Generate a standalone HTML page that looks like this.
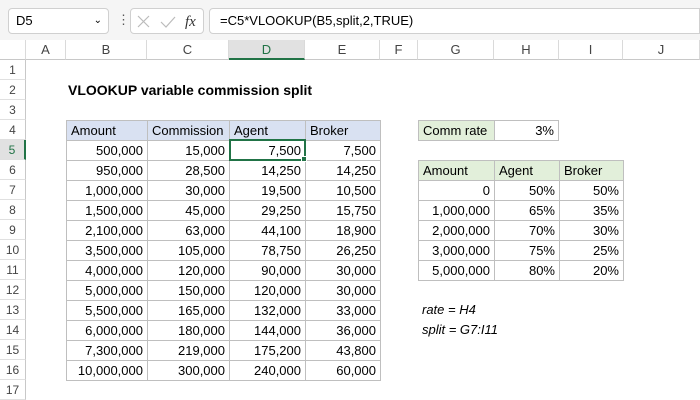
<!DOCTYPE html>
<html><head><meta charset="utf-8"><style>
*{box-sizing:border-box;margin:0;padding:0}
body{width:700px;height:400px;overflow:hidden;background:#fff;font-family:"Liberation Sans",sans-serif;position:relative;color:#000}
.a{position:absolute}
.c{position:absolute;font-size:13px;line-height:19px;height:21px;padding:0 4px;white-space:nowrap;overflow:hidden;border:1px solid #bfbfbf}
.r{text-align:right}
.hd{background:#d9e1f2}
.hg{background:#e2efda}
.ch{position:absolute;top:40px;height:20px;font-size:13px;line-height:20px;text-align:center;color:#444;border-right:1px solid #dadada;border-bottom:1px solid #c8c8c8;background:#fff}
.rh{position:absolute;left:0;width:26px;height:20px;font-size:12px;line-height:20px;text-align:center;color:#444;border-bottom:1px solid #e0e0e0;border-right:1px solid #c8c8c8;background:#fff}
</style></head><body>
<div class="a" style="left:0;top:0;width:700px;height:40px;background:#f5f5f5"></div>
<div class="a" style="left:8px;top:8px;width:101px;height:26px;background:#fff;border:1px solid #d0d0d0;border-radius:4px;font-size:13px;line-height:24px;padding-left:7px">D5<span style="position:absolute;right:6px;top:0;font-size:10px">&#8964;</span></div>
<div class="a" style="left:117px;top:13px;font-size:13px;color:#555;line-height:14px">&#8942;</div>
<div class="a" style="left:130px;top:8px;width:74px;height:26px;background:#fff;border:1px solid #d0d0d0;border-radius:4px"></div>
<svg class="a" style="left:135px;top:13px" width="70" height="18"><path d="M3 3l11 11M14 3L3 14" stroke="#bbb" stroke-width="1.2" fill="none"/><path d="M26 9l5 5 9-10" stroke="#bbb" stroke-width="1.2" fill="none"/><text x="50" y="13" font-family="Liberation Serif" font-style="italic" font-size="15" fill="#333">fx</text></svg>
<div class="a" style="left:209px;top:8px;width:491px;height:26px;background:#fff;border:1px solid #d0d0d0;border-radius:4px 0 0 4px;font-size:13px;line-height:24px;padding-left:10px">=C5*VLOOKUP(B5,split,2,TRUE)</div>

<div class="ch" style="left:0;width:26px;background:#fff"></div>
<div class="ch" style="left:26px;width:40px">A</div>
<div class="ch" style="left:66px;width:81px">B</div>
<div class="ch" style="left:147px;width:82px">C</div>
<div class="ch" style="left:229px;width:76px;background:#e1e1e1;border-bottom:2px solid #217346;color:#217346">D</div>
<div class="ch" style="left:305px;width:75px">E</div>
<div class="ch" style="left:380px;width:38px">F</div>
<div class="ch" style="left:418px;width:76px">G</div>
<div class="ch" style="left:494px;width:65px">H</div>
<div class="ch" style="left:559px;width:64px">I</div>
<div class="ch" style="left:623px;width:77px">J</div>

<div class="rh" style="top:60px">1</div><div class="rh" style="top:80px">2</div><div class="rh" style="top:100px">3</div><div class="rh" style="top:120px">4</div>
<div class="rh" style="top:140px;background:#e1e1e1;border-right:2px solid #217346;color:#217346">5</div>
<div class="rh" style="top:160px">6</div><div class="rh" style="top:180px">7</div><div class="rh" style="top:200px">8</div><div class="rh" style="top:220px">9</div><div class="rh" style="top:240px">10</div><div class="rh" style="top:260px">11</div><div class="rh" style="top:280px">12</div><div class="rh" style="top:300px">13</div><div class="rh" style="top:320px">14</div><div class="rh" style="top:340px">15</div><div class="rh" style="top:360px">16</div><div class="rh" style="top:380px">17</div>

<div class="a" style="left:68px;top:80px;font-size:14px;font-weight:bold;line-height:20px">VLOOKUP variable commission split</div>

<div class="c hd" style="left:66px;top:120px;width:82px">Amount</div>
<div class="c hd" style="left:147px;top:120px;width:83px">Commission</div>
<div class="c hd" style="left:229px;top:120px;width:77px">Agent</div>
<div class="c hd" style="left:305px;top:120px;width:76px">Broker</div>
<div id="t"></div>
<script>
var d=[["500,000","15,000","7,500","7,500"],["950,000","28,500","14,250","14,250"],["1,000,000","30,000","19,500","10,500"],["1,500,000","45,000","29,250","15,750"],["2,100,000","63,000","44,100","18,900"],["3,500,000","105,000","78,750","26,250"],["4,000,000","120,000","90,000","30,000"],["5,000,000","150,000","120,000","30,000"],["5,500,000","165,000","132,000","33,000"],["6,000,000","180,000","144,000","36,000"],["7,300,000","219,000","175,200","43,800"],["10,000,000","300,000","240,000","60,000"]];
var x=[66,147,229,305],w=[82,83,77,76],h="";
d.forEach(function(r,i){r.forEach(function(v,j){h+='<div class="c r" style="left:'+x[j]+'px;top:'+(140+20*i)+'px;width:'+w[j]+'px">'+v+'</div>';});});
var g=[["0","50%","50%"],["1,000,000","65%","35%"],["2,000,000","70%","30%"],["3,000,000","75%","25%"],["5,000,000","80%","20%"]];
var gx=[418,494,559],gw=[77,66,65];
g.forEach(function(r,i){r.forEach(function(v,j){h+='<div class="c r" style="left:'+gx[j]+'px;top:'+(180+20*i)+'px;width:'+gw[j]+'px">'+v+'</div>';});});
document.getElementById('t').innerHTML=h;
</script>
<div class="c" style="left:229px;top:139px;width:77px;height:22px;border:2px solid #217346;background:transparent"></div>
<div class="a" style="left:301px;top:156px;width:6px;height:6px;background:#217346;border:1px solid #fff"></div>

<div class="c hg" style="left:418px;top:120px;width:77px">Comm rate</div>
<div class="c r" style="left:494px;top:120px;width:65px">3%</div>
<div class="c hg" style="left:418px;top:160px;width:77px">Amount</div>
<div class="c hg" style="left:494px;top:160px;width:66px">Agent</div>
<div class="c hg" style="left:559px;top:160px;width:65px">Broker</div>

<div class="a" style="left:422px;top:302px;font-size:13px;font-style:italic">rate = H4</div>
<div class="a" style="left:422px;top:322px;font-size:13px;font-style:italic">split = G7:I11</div>
</body></html>
